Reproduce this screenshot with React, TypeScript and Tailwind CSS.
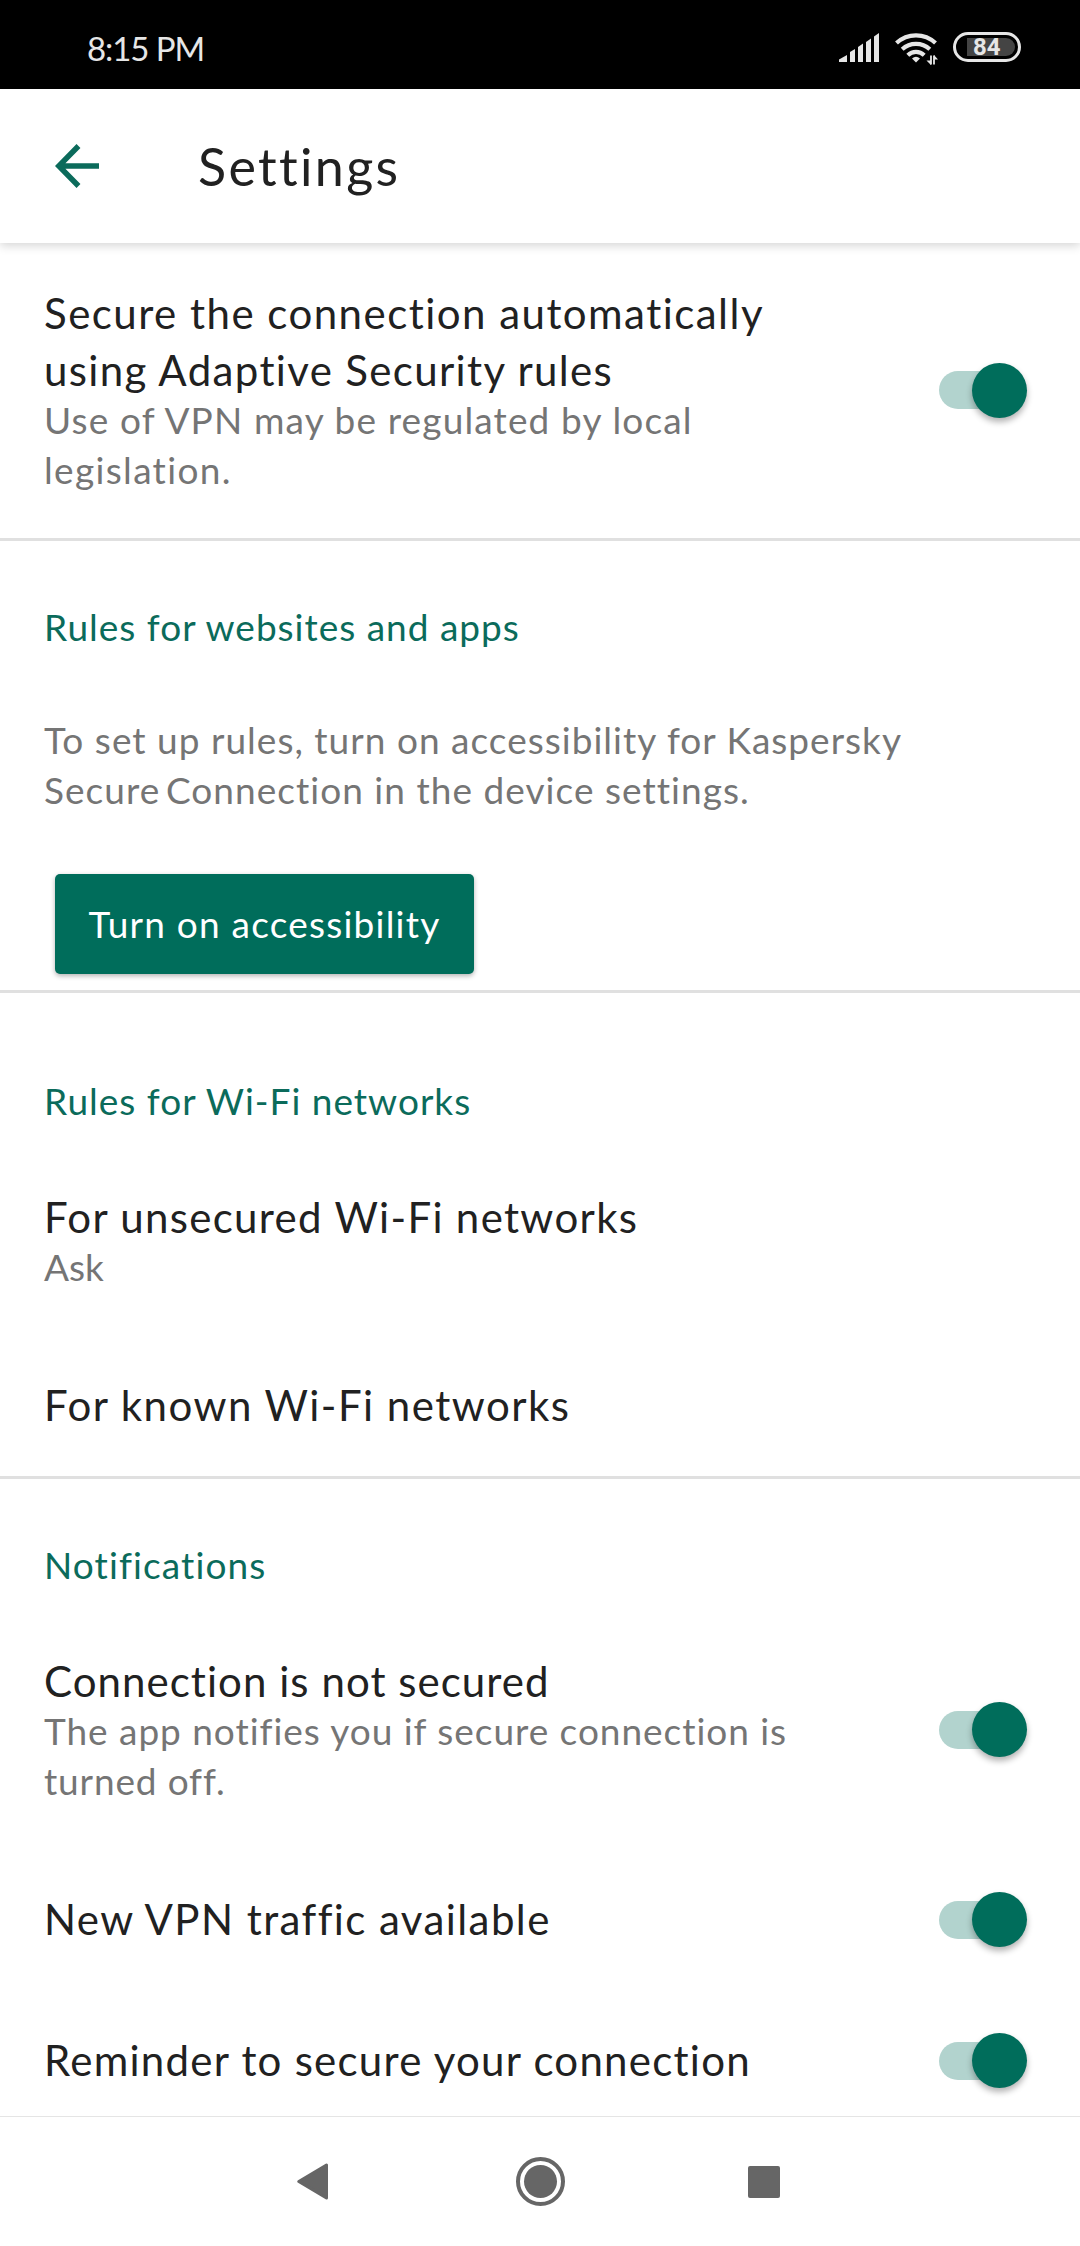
import React from 'react';

const SignalIcon: React.FC = () => (
  <svg width="40" height="29" viewBox="0 0 40 29" fill="#e6e6e6">
    <path d="M0 29v-2.500L8 22v7z" />
    <path d="M11 29V19l5-3v13z" />
    <path d="M19 29V14l5-3.500V29z" />
    <path d="M27 29V9l5-3.500V29z" />
    <path d="M35 29V3.500L40 0v29z" />
  </svg>
);

const WifiIcon: React.FC = () => (
  <svg width="44" height="34" viewBox="0 0 44 34" fill="none" stroke="#e6e6e6" strokeWidth="4.200">
    <path d="M1.500 11a28.500 28.500 0 0 1 39 0" />
    <path d="M7.200 17.200a20.300 20.300 0 0 1 27.600 0" />
    <path d="M12.800 23.200a12 12 0 0 1 16.400 0" />
    <path d="M21 30.500l-4-4q4-3.500 8 0z" fill="#e6e6e6" stroke="none" />
    <path d="M36 23.500v9M39 32.500v-9" strokeWidth="1.800" />
    <path d="M31.500 28.500h4.500v4.500zM43 27.500H39v-4.500z" fill="#e6e6e6" stroke="none" />
  </svg>
);

const Toggle: React.FC = () => (
  <div className="flex h-14 w-[88px] shrink-0 items-center">
    <div className="h-[38px] w-[82px] rounded-full bg-[#b2d3ce]"></div>
    <div className="-ml-[49px] size-[55px] shrink-0 rounded-full bg-[#006d5b] shadow-[0_4px_6px_rgba(0,0,0,0.3)]"></div>
  </div>
);

export default function App() {
  return (
    <div className="flex h-[2246px] w-[1080px] flex-col overflow-hidden bg-white font-['Lato','Open_Sans',sans-serif] whitespace-nowrap text-[#212121]">
      {/* Status bar */}
      <div className="flex h-[89px] shrink-0 items-center bg-black pr-[59px] pl-[87px] text-[#e6e6e6]">
        <span className="mt-[6px] text-[33px] leading-10 tracking-[-0.033em]">8:15 PM</span>
        <div className="mt-[5px] ml-auto flex items-center">
          <SignalIcon />
          <div className="mt-1 ml-4">
            <WifiIcon />
          </div>
          <div className="ml-[14px] flex h-[30px] w-[68px] items-center rounded-full border-[3px] border-[#e6e6e6] pl-[11px]">
            <div className="flex h-[18px] w-12 items-center rounded-r-full bg-[#444] pl-[6px] font-['Roboto',sans-serif] text-[24px] leading-none font-bold">84</div>
          </div>
        </div>
      </div>

      {/* App bar */}
      <header className="flex h-[154px] shrink-0 items-center pl-[55px] shadow-[0_3px_9px_rgba(0,0,0,0.16)]">
        <svg width="44" height="44" viewBox="0 0 44 44" fill="none" stroke="#0b6b5b" strokeWidth="5.500">
          <path d="M23.500 2L3.800 22l19.700 20M3.800 22H44" />
        </svg>
        <h1 className="ml-[99px] text-[52px] leading-[62px] tracking-[0.045em]">Settings</h1>
      </header>

      <main className="flex-1">
        <section className="border-b-[3px] border-[#e0e0e0] pt-[42px] pb-[43px] pl-11">
          <div className="flex items-center justify-between pr-[53px]">
            <div>
              <h2 className="text-[42px] leading-[57px]">
                <span className="block tracking-[0.035em]">Secure the connection automatically</span>
                <span className="block tracking-[0.032em]">using Adaptive Security rules</span>
              </h2>
              <p className="-mt-1 text-[37px] leading-[50px] text-[#757575]">
                <span className="block tracking-[0.031em]">Use of VPN may be regulated by local</span>
                <span className="block tracking-[0.036em]">legislation.</span>
              </p>
            </div>
            <Toggle />
          </div>
        </section>

        {/* Websites and apps */}
        <section className="border-b-[3px] border-[#e0e0e0] pt-[61px] pb-4 pl-11">
          <h3 className="text-[37px] leading-[50px] tracking-[0.027em] text-[#0b6b5b]">Rules for websites and apps</h3>
          <p className="mt-[63px] text-[37px] leading-[50px] text-[#757575]">
            <span className="block tracking-[0.0275em]">To set up rules, turn on accessibility for Kaspersky</span>
            <span className="block tracking-[0.028em]">Secure&#8201;Connection in the device settings.</span>
          </p>
          <button className="mt-[59px] ml-[11px] flex h-[100px] w-[419px] items-center justify-center rounded-[5px] bg-[#006d5b] shadow-[0_2px_5px_rgba(0,0,0,0.3)]">
            <span className="text-[37px] leading-[50px] tracking-[0.033em] text-white">Turn on accessibility</span>
          </button>
        </section>

        {/* Wi-Fi networks */}
        <section className="border-b-[3px] border-[#e0e0e0] pt-[83px] pb-[42px] pl-11">
          <h3 className="text-[37px] leading-[50px] tracking-[0.027em] text-[#0b6b5b]">Rules for Wi-Fi networks</h3>
          <h2 className="mt-[63px] text-[42px] leading-[57px] tracking-[0.0315em]">For unsecured Wi-Fi networks</h2>
          <p className="-mt-1 text-[37px] leading-[50px] text-[#757575]">Ask</p>
          <h2 className="mt-[85px] text-[42px] leading-[57px] tracking-[0.035em]">For known Wi-Fi networks</h2>
        </section>

        {/* Notifications */}
        <section className="pt-[61px] pr-[53px] pl-11">
          <h3 className="text-[37px] leading-[50px] tracking-[0.030em] text-[#0b6b5b]">Notifications</h3>
          <div className="mt-[63px] flex items-center justify-between">
            <div>
              <h2 className="text-[42px] leading-[57px] tracking-[0.025em]">Connection is not secured</h2>
              <p className="-mt-1 text-[37px] leading-[50px] text-[#757575]">
                <span className="block tracking-[0.026em]">The app notifies you if secure connection is</span>
                <span className="block tracking-[0.023em]">turned off.</span>
              </p>
            </div>
            <Toggle />
          </div>
          <div className="mt-[85px] flex items-center justify-between">
            <h2 className="text-[42px] leading-[57px] tracking-[0.034em]">New VPN traffic available</h2>
            <Toggle />
          </div>
          <div className="mt-[84px] flex items-center justify-between">
            <h2 className="text-[42px] leading-[57px] tracking-[0.030em]">Reminder to secure your connection</h2>
            <Toggle />
          </div>
        </section>
      </main>

      {/* Navigation bar */}
      <nav className="flex h-[130px] shrink-0 items-center border-t border-[#e5e5e5] pl-[297px]">
        <svg width="31" height="37" viewBox="0 0 31 37" fill="#666" stroke="#666" strokeWidth="3" strokeLinejoin="round">
          <path d="M1.800 18.500L29.500 2v33z" />
        </svg>
        <div className="ml-[188px] flex size-[49px] items-center justify-center rounded-full border-4 border-[#666]">
          <div className="size-[33px] shrink-0 rounded-full bg-[#666]"></div>
        </div>
        <div className="ml-[183px] size-8 rounded-[2px] bg-[#666]"></div>
      </nav>
    </div>
  );
}
